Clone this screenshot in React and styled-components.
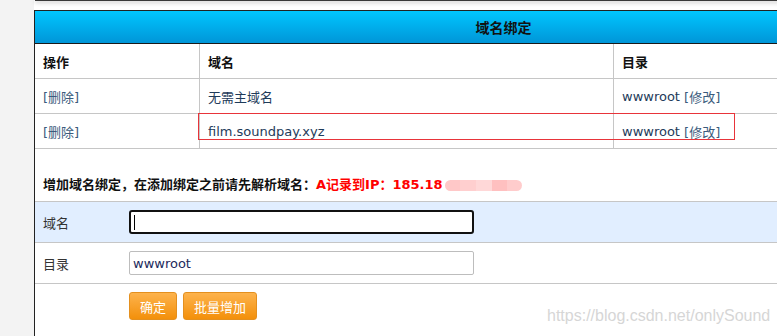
import React from "react";
import styled, { createGlobalStyle } from "styled-components";

const Global = createGlobalStyle`
  html, body {
    margin: 0;
    padding: 0;
    overflow: hidden;
    background: #f3f3f3;
    font-family: "DejaVu Sans", "Noto Sans CJK SC", sans-serif;
    font-size: 13px;
  }
`;

const Stage = styled.div`
  position: relative;
  margin-left: 34px;
  width: 1000px;
  height: 336px;
  background: #fff;
`;

const TopEdge = styled.div`
  height: 1px;
  margin-left: 1px;
  background: #3a3a3a;
  box-shadow: 0 1px 4px rgba(0, 0, 0, 0.55);
`;

const Panel = styled.div`
  position: relative;
  margin-top: 9px;
  width: 937px;
  border-left: 1px solid #222;
  background: #fff;
  height: 330px;
`;

const Title = styled.div`
  height: 32px;
  border-top: 1px solid #222;
  border-bottom: 1px solid #1a1a1a;
  background: linear-gradient(#00c6ff, #0096d8);
  display: flex;
  align-items: center;
  justify-content: center;
  font-weight: bold;
  font-size: 14px;
  color: #111;
`;

const Row = styled.div`
  display: grid;
  grid-template-columns: 164px 414px 1fr;
  height: 34px;
  border-bottom: 1px solid #c6c6c6;
`;

const Cell = styled.div`
  display: flex;
  align-items: center;
  padding-left: 8px;
  color: ${(p) => (p.$head ? "#111" : "#1e3b5a")};
  font-weight: ${(p) => (p.$head ? "bold" : "normal")};
  & + & {
    border-left: 1px solid #c6c6c6;
  }
`;

const Link = styled.a`
  color: #3b5b7c;
  text-decoration: none;
  cursor: pointer;
`;

const Mark = styled.div`
  position: absolute;
  left: 163px;
  top: 103px;
  width: 535px;
  height: 25px;
  border: 1px solid #e8343a;
  pointer-events: none;
`;

const Notice = styled.div`
  margin: 26px 0 6px;
  padding-left: 8px;
  height: 20px;
  line-height: 20px;
  font-weight: bold;
  color: #111;
  display: flex;
  align-items: center;
`;

const Red = styled.span`
  color: #f00;
`;

const Blur = styled.span`
  display: inline-flex;
  height: 11px;
  margin-left: 2px;
  border-radius: 6px;
  overflow: hidden;
  filter: blur(0.6px);
`;

const BlurPart = styled.span`
  width: ${(p) => p.$w}px;
  background: ${(p) => p.$c};
`;

const Form = styled.div`
  border-top: 1px solid #c6c6c6;
`;

const FormRow = styled.div`
  display: grid;
  grid-template-columns: 94px 1fr;
  align-items: center;
  height: 40px;
  border-bottom: 1px solid #c6c6c6;
  background: ${(p) => (p.$hl ? "#e1eeff" : "#fff")};
`;

const Label = styled.div`
  padding-left: 8px;
  color: #333;
`;

const Input = styled.div`
  box-sizing: border-box;
  width: 345px;
  height: 24px;
  border: ${(p) => (p.$focus ? "2px solid #111" : "1px solid #bdbdbd")};
  border-radius: ${(p) => (p.$focus ? "3px" : "2px")};
  background: #fff;
  display: flex;
  align-items: center;
  padding-left: 3px;
  font-size: 13px;
  color: #1c2a5c;
`;

const Caret = styled.span`
  width: 1px;
  height: 15px;
  background: #000;
`;

const Buttons = styled.div`
  display: flex;
  gap: 6px;
  margin: 8px 0 0 94px;
`;

const Button = styled.button`
  height: 28px;
  padding: 0 10px;
  border: 1px solid #e4901f;
  border-radius: 3px;
  background: linear-gradient(#fdb34d, #f3900b);
  color: #fff;
  font-family: "DejaVu Sans", "Noto Sans CJK SC", sans-serif;
  font-size: 13px;
`;

const Watermark = styled.div`
  position: absolute;
  left: 513px;
  top: 307px;
  font-family: "Liberation Sans", Arial, sans-serif;
  font-size: 16px;
  color: #d6d6d6;
  text-shadow: 0 0 1px #fff;
  white-space: nowrap;
  pointer-events: none;
`;

const rows = [
  { domain: "无需主域名", dir: "wwwroot" },
  { domain: "film.soundpay.xyz", dir: "wwwroot" },
];

export default function App() {
  return (
    <>
      <Global />
      <Stage>
        <TopEdge />
        <Panel>
          <Title>域名绑定</Title>
          <Row>
            <Cell $head>操作</Cell>
            <Cell $head>域名</Cell>
            <Cell $head>目录</Cell>
          </Row>
          {rows.map((r, i) => (
            <Row key={i}>
              <Cell>
                <Link>[删除]</Link>
              </Cell>
              <Cell>{r.domain}</Cell>
              <Cell>
                {r.dir}&nbsp;<Link>[修改]</Link>
              </Cell>
            </Row>
          ))}
          <Mark />
          <Notice>
            增加域名绑定，在添加绑定之前请先解析域名：
            <Red>A记录到IP：185.18</Red>
            <Blur>
              <BlurPart $w={15} $c="#ffc8c8" />
              <BlurPart $w={16} $c="#ffcfcf" />
              <BlurPart $w={16} $c="#ffd8d8" />
              <BlurPart $w={15} $c="#ffc0c0" />
              <BlurPart $w={15} $c="#ffcccc" />
            </Blur>
          </Notice>
          <Form>
            <FormRow $hl>
              <Label>域名</Label>
              <Input $focus>
                <Caret />
              </Input>
            </FormRow>
            <FormRow>
              <Label>目录</Label>
              <Input>wwwroot</Input>
            </FormRow>
          </Form>
          <Buttons>
            <Button>确定</Button>
            <Button>批量增加</Button>
          </Buttons>
        </Panel>
        <Watermark>https://blog.csdn.net/onlySound</Watermark>
      </Stage>
    </>
  );
}
